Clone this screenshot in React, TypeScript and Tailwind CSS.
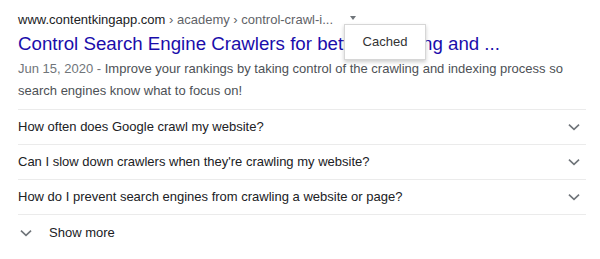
const FAQS = [
  "How often does Google crawl my website?",
  "Can I slow down crawlers when they're crawling my website?",
  "How do I prevent search engines from crawling a website or page?",
];

function ExpandMore({ className }: { className?: string }) {
  return (
    <svg
      className={className}
      viewBox="0 0 24 24"
      width="22"
      height="22"
      fill="none"
      stroke="currentColor"
      strokeWidth={1.8}
    >
      <path d="M6.5 9.5L12 14.5l5.5-5" />
    </svg>
  );
}

export default function App() {
  return (
    <div className="relative h-[259px] w-[600px] overflow-hidden bg-white [font-family:'Liberation_Sans',Arial,sans-serif]">
      <div className="box-content w-[568px] pl-[18px] pt-[9px]">
        {/* Breadcrumb URL */}
        <div className="flex items-center whitespace-nowrap text-[13px] leading-[22px]">
          <span className="text-[#202124]">www.contentkingapp.com</span>
          <span className="text-[#5f6368]">&nbsp;› academy › control-crawl-i...</span>
          <span className="ml-[17px] mt-[-4px] h-0 w-0 border-x-[3px] border-t-[4px] border-x-transparent border-t-[#70757a]" />
        </div>

        {/* Title */}
        <div className="whitespace-nowrap text-[18.7px] leading-[26px] text-[#1a0dab]">
          Control Search Engine Crawlers for better Crawling and ...
        </div>

        {/* Snippet */}
        <div className="mt-[1px] pb-[7px] text-[13px] leading-[22px] text-[#4d5156]">
          <span className="text-[#70757a]">Jun 15, 2020 - </span>
          Improve your rankings by taking control of the crawling and indexing process so search
          engines know what to focus on!
        </div>

        {/* People also ask */}
        <div className="border-t border-[#ebebeb]">
          {FAQS.map((q) => (
            <div
              key={q}
              className="flex h-[35px] items-center justify-between border-b border-[#ebebeb] text-[13px] text-[#202124]"
            >
              <span>{q}</span>
              <ExpandMore className="mr-[1px] text-[#70757a]" />
            </div>
          ))}
          <div className="flex h-[35px] items-center text-[13px] text-[#202124]">
            <ExpandMore className="ml-[-3px] text-[#70757a]" />
            <span className="ml-[12px]">Show more</span>
          </div>
        </div>
      </div>

      {/* Cached popup */}
      <div className="absolute left-[344px] top-[24px] flex h-[36px] w-[82px] items-center justify-center border border-[#d6d6d6] bg-white text-[13px] text-[#333] shadow-[0_2px_4px_rgba(0,0,0,0.2)]">
        Cached
      </div>
    </div>
  );
}
